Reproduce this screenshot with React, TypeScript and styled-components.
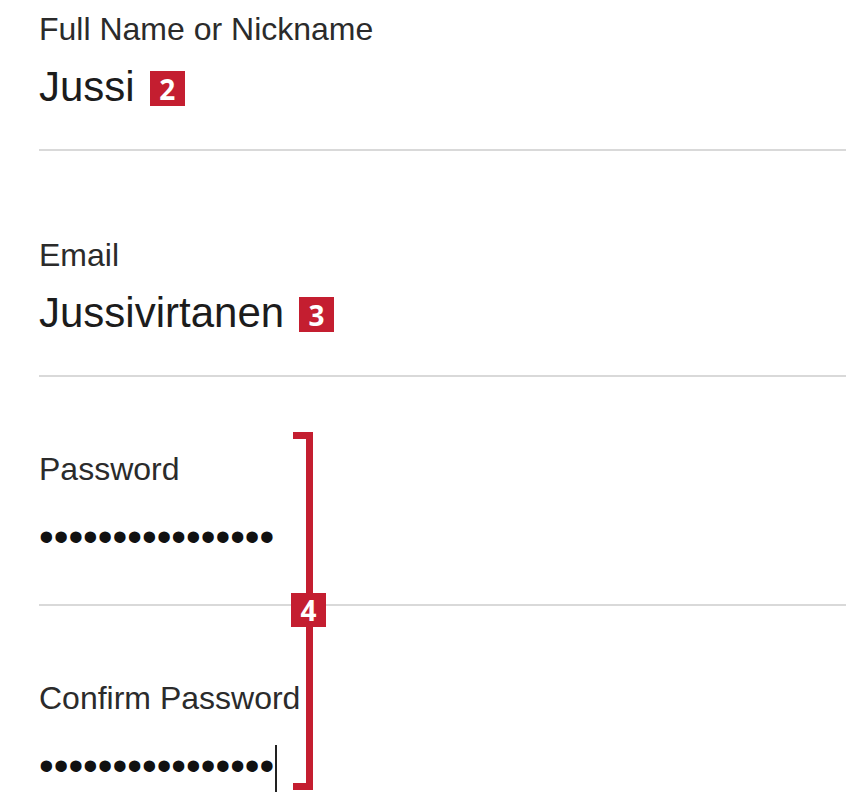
import styled, { createGlobalStyle } from "styled-components";

const accent = "#c41e30";

const fields = [
  { label: "Full Name or Nickname", value: "Jussi", badge: "2", gapTop: 11 },
  { label: "Email", value: "Jussivirtanen", badge: "3", gapTop: 86 },
];

const passwords = [
  { label: "Password", length: 16, focused: false },
  { label: "Confirm Password", length: 16, focused: true },
];

const GlobalStyle = createGlobalStyle`
  html, body {
    margin: 0;
    padding: 0;
    background: #ffffff;
  }

  body {
    font-family: "Liberation Sans", Arial, sans-serif;
    color: #222;
    overflow: hidden;
  }
`;

export default function App() {
  return (
    <>
      <GlobalStyle />
      <StyledForm>
        {fields.map((field) => (
          <StyledField key={field.label} $gapTop={field.gapTop}>
            <StyledLabel>{field.label}</StyledLabel>
            <StyledValueRow>
              <StyledValue>{field.value}</StyledValue>
              <StyledBadge>{field.badge}</StyledBadge>
            </StyledValueRow>
            <StyledDivider />
          </StyledField>
        ))}

        <StyledPasswordGroup>
          {passwords.map((field) => (
            <StyledField key={field.label} $gapTop={74}>
              <StyledLabel>{field.label}</StyledLabel>
              <StyledSecretRow>
                <StyledSecret>{"\u2022".repeat(field.length)}</StyledSecret>
                {field.focused && <StyledCaret />}
              </StyledSecretRow>
              <StyledDivider />
            </StyledField>
          ))}

          <StyledBracket>
            <StyledBracketBadge>4</StyledBracketBadge>
          </StyledBracket>
        </StyledPasswordGroup>
      </StyledForm>
    </>
  );
}

const StyledForm = styled.main`
  display: flex;
  flex-direction: column;
  padding-left: 39px;
  width: 807px;
  height: 800px;
`;

const StyledPasswordGroup = styled.section`
  position: relative;
  display: flex;
  flex-direction: column;
`;

interface StyledFieldProps {
  $gapTop: number;
}

const StyledField = styled.div<StyledFieldProps>`
  display: flex;
  flex-direction: column;
  padding-top: ${(props) => props.$gapTop}px;
`;

const StyledLabel = styled.label`
  font-size: 32px;
  line-height: 36px;
  color: #2b2b2b;
`;

const StyledValueRow = styled.div`
  display: flex;
  align-items: center;
  gap: 15px;
  margin-top: 16px;
`;

const StyledValue = styled.span`
  font-size: 42px;
  line-height: 48px;
  color: #1c1c1c;
`;

const StyledBadge = styled.span`
  display: flex;
  align-items: center;
  justify-content: center;
  width: 35px;
  height: 35px;
  margin-top: 3px;
  background: ${accent};
  color: #ffffff;
  font-family: "Open Sans", "Noto Sans", sans-serif;
  font-weight: 700;
  font-size: 28px;
  line-height: 1;
`;

const StyledSecretRow = styled.div`
  display: flex;
  align-items: center;
  height: 48px;
  margin-top: 26px;
  margin-bottom: 5px;
`;

const StyledSecret = styled.span`
  font-size: 42px;
  line-height: 48px;
  color: #111;
`;

const StyledCaret = styled.span`
  width: 2px;
  height: 47px;
  margin-left: 1px;
  background: #222;
  position: relative;
  top: 2px;
`;

const StyledDivider = styled.hr`
  margin: 38px 0 0;
  border: none;
  height: 2px;
  background: #d9d9d9;
`;

const StyledBracket = styled.div`
  position: absolute;
  left: 254px;
  top: 55px;
  width: 13px;
  height: 344px;
  border: 7px solid ${accent};
  border-left: none;
`;

const StyledBracketBadge = styled.span`
  position: absolute;
  left: -2px;
  top: 154px;
  display: flex;
  align-items: center;
  justify-content: center;
  width: 35px;
  height: 34px;
  background: ${accent};
  color: #ffffff;
  font-family: "Open Sans", "Noto Sans", sans-serif;
  font-weight: 700;
  font-size: 28px;
  line-height: 1;
`;
